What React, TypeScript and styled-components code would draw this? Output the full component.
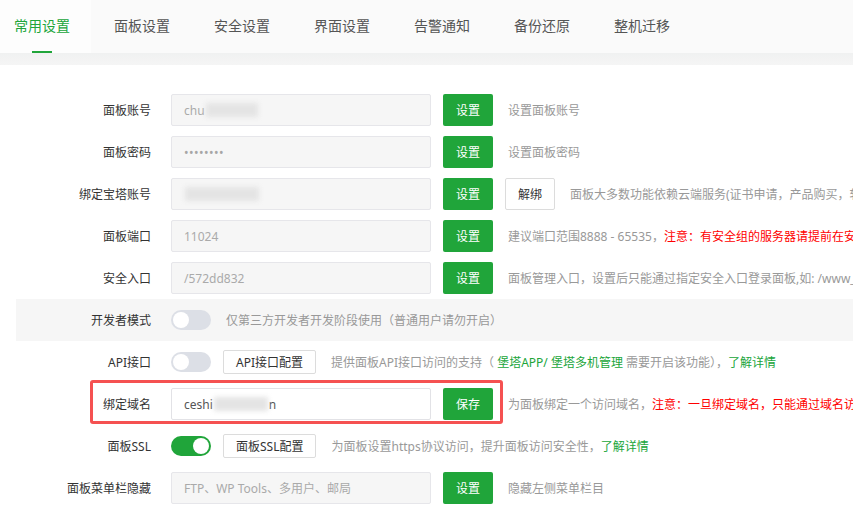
import React from "react";
import styled, { createGlobalStyle, css } from "styled-components";

const GREEN = "#20a53a";

const GlobalStyle = createGlobalStyle`
  html, body {
    margin: 0;
    padding: 0;
    background: #fff;
    overflow: hidden;
  }
  body {
    font-family: "Noto Sans", "Noto Sans CJK SC", sans-serif;
    font-size: 12px;
    color: #333;
  }
  * { box-sizing: border-box; }
`;

const Page = styled.div`
  width: 853px;
  height: 505px;
  overflow: hidden;
  background: #fff;
`;

const TabBar = styled.div`
  display: flex;
  align-items: stretch;
  height: 53px;
  background: #fafafa;
  gap: 9px;
`;

const Tab = styled.div<{ $active?: boolean }>`
  position: relative;
  display: flex;
  align-items: center;
  padding: 0 21px 0 14px;
  font-size: 14px;
  line-height: 20px;
  padding-bottom: 1px;
  color: #555;
  white-space: nowrap;
  ${(p) =>
    p.$active &&
    css`
      color: ${GREEN};
      background: #fdfdfd;
      &::after {
        content: "";
        position: absolute;
        left: 32px;
        bottom: 0;
        width: 20px;
        height: 2px;
        background: ${GREEN};
      }
    `}
`;

const Band = styled.div`
  height: 12px;
  background: linear-gradient(#f0f1f1, #f5f5f5);
`;

const Form = styled.div`
  padding: 24px 0 0 16px;
`;

const Row = styled.div<{ $shaded?: boolean }>`
  position: relative;
  display: flex;
  align-items: center;
  height: 42px;
  white-space: nowrap;
  background: ${(p) => (p.$shaded ? "#f6f6f6" : "transparent")};
`;

const Label = styled.div`
  flex: 0 0 135px;
  text-align: right;
  font-size: 12px;
  color: #333;
  margin-right: 20px;
`;

const Input = styled.div<{ $editable?: boolean }>`
  flex: 0 0 260px;
  height: 32px;
  display: flex;
  align-items: center;
  padding: 0 12px;
  border: 1px solid ${(p) => (p.$editable ? "#e2e2e6" : "#e6e6ea")};
  border-radius: 2px;
  background: ${(p) => (p.$editable ? "#fff" : "#f6f6f6")};
  color: ${(p) => (p.$editable ? "#555" : "#aaa")};
  font-size: 12px;
  margin-right: 12px;
  overflow: hidden;
`;

const Masked = styled.span<{ $w: number }>`
  display: inline-block;
  width: ${(p) => p.$w}px;
  height: 14px;
  background: #e4e4e4;
  filter: blur(2.5px);
  margin: 0 1px;
`;

const Dots = styled.span`
  letter-spacing: 0.5px;
  color: #a6a6a6;
  font-size: 12px;
`;

const PrimaryButton = styled.button`
  flex: 0 0 50px;
  height: 32px;
  border: none;
  border-radius: 2px;
  background: ${GREEN};
  color: #fff;
  font-family: inherit;
  font-size: 12px;
  padding: 0;
  margin-right: 12px;
`;

const PlainButton = styled.button<{ $small?: boolean }>`
  height: ${(p) => (p.$small ? "24px" : "32px")};
  padding: 0 12px;
  border: 1px solid #dcdcdc;
  border-radius: 2px;
  background: #fff;
  color: #333;
  font-family: inherit;
  font-size: 12px;
  margin-right: 15px;
`;

const Desc = styled.div<{ $gap?: number }>`
  margin-left: ${(p) => p.$gap ?? 3}px;
  font-size: 12px;
  color: #999;
`;

const Warn = styled.span`
  color: #f00;
`;

const Link = styled.span`
  color: ${GREEN};
`;

const Switch = styled.div<{ $on?: boolean }>`
  position: relative;
  flex: 0 0 40px;
  height: 20px;
  border-radius: 10px;
  background: ${(p) => (p.$on ? GREEN : "#dcdfe6")};
  margin-right: 12px;
  &::after {
    content: "";
    position: absolute;
    top: 2px;
    left: ${(p) => (p.$on ? "22px" : "2px")};
    width: 16px;
    height: 16px;
    border-radius: 50%;
    background: #fff;
  }
`;

const Highlight = styled.div`
  position: absolute;
  left: 74px;
  top: -3px;
  width: 413px;
  height: 44px;
  border: 3px solid #f55151;
  border-radius: 3px;
  pointer-events: none;
`;

const tabs = ["常用设置", "面板设置", "安全设置", "界面设置", "告警通知", "备份还原", "整机迁移"];

export default function App() {
  return (
    <Page>
      <GlobalStyle />
      <TabBar>
        {tabs.map((t, i) => (
          <Tab key={t} $active={i === 0}>
            {t}
          </Tab>
        ))}
      </TabBar>
      <Band />
      <Form>
        <Row>
          <Label>面板账号</Label>
          <Input>
            chu<Masked $w={52} />
          </Input>
          <PrimaryButton>设置</PrimaryButton>
          <Desc>设置面板账号</Desc>
        </Row>
        <Row>
          <Label>面板密码</Label>
          <Input>
            <Dots>••••••••</Dots>
          </Input>
          <PrimaryButton>设置</PrimaryButton>
          <Desc>设置面板密码</Desc>
        </Row>
        <Row>
          <Label>绑定宝塔账号</Label>
          <Input>
            <Masked $w={74} />
          </Input>
          <PrimaryButton>设置</PrimaryButton>
          <PlainButton>解绑</PlainButton>
          <Desc $gap={0}>面板大多数功能依赖云端服务(证书申请，产品购买，软件商店等)</Desc>
        </Row>
        <Row>
          <Label>面板端口</Label>
          <Input>11024</Input>
          <PrimaryButton>设置</PrimaryButton>
          <Desc>
            建议端口范围8888 - 65535，<Warn>注意：有安全组的服务器请提前在安全组放行新端口</Warn>
          </Desc>
        </Row>
        <Row>
          <Label>安全入口</Label>
          <Input>/572dd832</Input>
          <PrimaryButton>设置</PrimaryButton>
          <Desc>面板管理入口，设置后只能通过指定安全入口登录面板,如: /www_bt_cn</Desc>
        </Row>
        <Row $shaded>
          <Label>开发者模式</Label>
          <Switch />
          <Desc>仅第三方开发者开发阶段使用（普通用户请勿开启）</Desc>
        </Row>
        <Row>
          <Label>API接口</Label>
          <Switch />
          <PlainButton $small>API接口配置</PlainButton>
          <Desc $gap={0}>
            提供面板API接口访问的支持（ <Link>堡塔APP/ 堡塔多机管理</Link> 需要开启该功能），
            <Link>了解详情</Link>
          </Desc>
        </Row>
        <Row>
          <Highlight />
          <Label>绑定域名</Label>
          <Input $editable>
            ceshi<Masked $w={54} />n
          </Input>
          <PrimaryButton>保存</PrimaryButton>
          <Desc>
            为面板绑定一个访问域名，<Warn>注意：一旦绑定域名，只能通过域名访问面板</Warn>
          </Desc>
        </Row>
        <Row>
          <Label>面板SSL</Label>
          <Switch $on />
          <PlainButton $small>面板SSL配置</PlainButton>
          <Desc $gap={0}>
            为面板设置https协议访问，提升面板访问安全性，<Link>了解详情</Link>
          </Desc>
        </Row>
        <Row>
          <Label>面板菜单栏隐藏</Label>
          <Input>FTP、WP Tools、多用户、邮局</Input>
          <PrimaryButton>设置</PrimaryButton>
          <Desc>隐藏左侧菜单栏目</Desc>
        </Row>
      </Form>
    </Page>
  );
}
